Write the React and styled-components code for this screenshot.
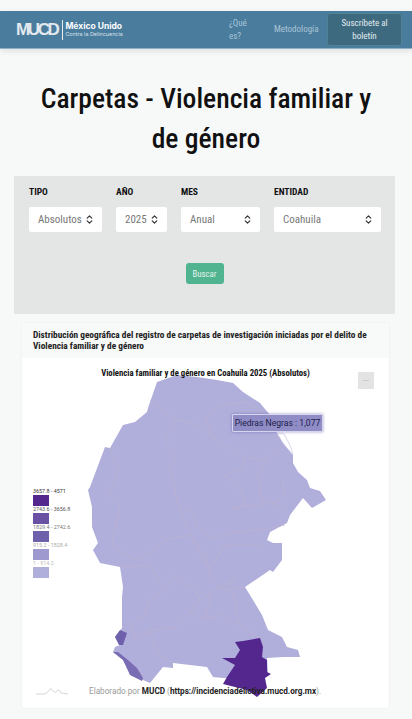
import React from "react";
import styled, { createGlobalStyle } from "styled-components";
import { ChevronsUpDown } from "lucide-react";

const narrow = `"Liberation Sans Narrow", "Roboto Condensed", Roboto, sans-serif`;

const GlobalStyle = createGlobalStyle`
  html, body {
    margin: 0;
    padding: 0;
    background: #f7f9f9;
    font-family: ${narrow};
    overflow: hidden;
  }
  * { box-sizing: border-box; }
`;

const filters = [
  { label: "TIPO", value: "Absolutos" },
  { label: "AÑO", value: "2025" },
  { label: "MES", value: "Anual" },
  { label: "ENTIDAD", value: "Coahuila" }
];

const legend = [
  { label: "3657.8 - 4571", fill: "#54278f", color: "#333" },
  { label: "2743.6 - 3656.8", fill: "#6a51a3", color: "#555" },
  { label: "1829.4 - 2742.6", fill: "#6e60ab", color: "#777" },
  { label: "915.2 - 1828.4", fill: "#9e9ad0", color: "#aaa" },
  { label: "1 - 914.2", fill: "#b0aedb", color: "#bbb" }
];

const outline =
  "M177 375 L197 377 L217 380 L233 383 L243 392 L260 403 L270 415 L277 433 L283 443 L293 455 L293 463 L298 472 L307 480 L310 488 L320 491 L326 500 L312 508 L303 498 L290 515 L287 523 L270 532 L267 540 L273 543 L282 543 L282 560 L273 572 L270 570 L245 587 L253 600 L262 615 L268 630 L282 637 L287 647 L298 650 L300 657 L283 657 L267 658 L268 673 L250 680 L223 678 L213 677 L207 667 L173 663 L173 668 L163 667 L150 683 L143 680 L130 672 L123 660 L113 652 L115 647 L120 645 L115 637 L122 628 L122 597 L123 587 L120 567 L100 563 L93 550 L98 543 L92 527 L92 507 L88 490 L90 487 L105 447 L110 448 L123 425 L135 422 L147 412 L148 408 L157 382 Z";

const borders = [
  "M150 400 L175 420 L200 425 L215 440 L245 458 L265 460 L283 445",
  "M175 420 L165 440 L175 455 L170 470 L178 505 L190 510 L198 528 L212 538 L235 532 L262 530 L285 525",
  "M215 440 L205 418 L220 405 L245 402 L262 412 L265 430 L280 438",
  "M110 448 L118 470 L108 495 L120 507 L115 530 L112 545 L135 560 L150 552 L165 540 L190 535 L205 555 L212 580 L225 590 L245 587",
  "M178 505 L195 545 L210 570 L225 545 L262 545",
  "M225 475 L240 490 L245 505 L235 510 L232 508 L260 505 L270 500 L290 515",
  "M245 458 L240 470 L225 475 M265 460 L258 475 L262 505 M282 480 L285 495 L272 505",
  "M120 567 L150 565 L165 590 L150 600 L145 615 L130 625 L135 640 L150 630 L175 628 L190 612 L205 620 L220 615 L240 625 L262 640",
  "M165 590 L175 575 L195 590 L200 600 L215 590 L235 580 L225 590",
  "M200 600 L190 612 M205 620 L210 595 M240 625 L232 590 M150 630 L158 655 L173 663"
];

const dark =
  "M235 642 L243 641 L260 638 L263 647 L262 657 L267 660 L267 672 L271 674 L265 678 L267 688 L257 697 L247 690 L223 684 L227 677 L235 665 L222 658 L235 658 L240 650 Z";
const midNorth = "M115 637 L120 630 L127 633 L123 645 L119 645 Z";
const midSouth = "M113 652 L118 652 L128 660 L137 668 L143 678 L142 681 L130 675 L123 660 Z";

const App = () => (
  <Page>
    <GlobalStyle />
    <Navbar>
      <Logo>
        <LogoMark>MUCD</LogoMark>
        <LogoText>
          <LogoName>México Unido</LogoName>
          <LogoTag>Contra la Delincuencia</LogoTag>
        </LogoText>
      </Logo>
      <NavLinks>
        <NavLink $width="30px">¿Qué es?</NavLink>
        <NavLink>Metodología</NavLink>
        <Subscribe>Suscríbete al boletín</Subscribe>
      </NavLinks>
    </Navbar>

    <Title>Carpetas - Violencia familiar y de género</Title>

    <FilterCard>
      <FilterGrid>
        {filters.map(f => (
          <Field key={f.label}>
            <FieldLabel>{f.label}</FieldLabel>
            <SelectBox>
              {f.value}
              <SelectIcon size={11} strokeWidth={2.6} />
            </SelectBox>
          </Field>
        ))}
      </FilterGrid>
      <SearchButton>Buscar</SearchButton>
    </FilterCard>

    <MapCard>
      <MapHeader>
        Distribución geográfica del registro de carpetas de investigación
        iniciadas por el delito de Violencia familiar y de género
      </MapHeader>
      <MapBody>
        <MapSvg viewBox="22 358 367 350">
          <path d={outline} fill="#b0aedb" />
          {borders.map((d, i) => (
            <path key={i} d={d} fill="none" stroke="#bdb3cf" strokeWidth="0.7" />
          ))}
          <path
            d="M277 433 L283 443 L293 455 L290 445 L284 434 Z"
            fill="#fff"
            stroke="#c9c6e2"
            strokeWidth="0.7"
          />
          <path d={midNorth} fill="#6e60ab" />
          <path d={midSouth} fill="#7a6db3" />
          <path d={dark} fill="#54278f" />
        </MapSvg>
        <ChartTitle>Violencia familiar y de género en Coahuila 2025 (Absolutos)</ChartTitle>
        <ExportButton>...</ExportButton>
        <Tooltip>Piedras Negras : 1,077</Tooltip>
        <Legend>
          {legend.map(l => (
            <LegendItem key={l.label}>
              <LegendLabel $color={l.color}>{l.label}</LegendLabel>
              <LegendSwatch $fill={l.fill} />
            </LegendItem>
          ))}
        </Legend>
        <Footer>
          <Spark viewBox="0 0 32 8">
            <path
              d="M0 7 L8 7 Q11 7 13 3 Q15 0 17 4 Q19 7 21 4 Q23 1 25 6 L32 7"
              fill="none"
              stroke="#c4c4c4"
              strokeWidth="0.7"
            />
          </Spark>
          <Credit>
            Elaborado por <b>MUCD</b> (<b>https://incidenciadelictiva.mucd.org.mx</b>).
          </Credit>
        </Footer>
      </MapBody>
    </MapCard>
  </Page>
);

export default App;

const Page = styled.div`
  width: 412px;
  height: 719px;
  padding-top: 11px;
  overflow: hidden;
`;

const Navbar = styled.nav`
  height: 38px;
  display: flex;
  align-items: center;
  justify-content: space-between;
  padding: 0 10px 0 16px;
  background: #4a7c9e;
  border-bottom: 1px solid #8fb0c6;
  box-shadow: 0 2px 6px rgba(0, 0, 0, 0.1);
`;

const Logo = styled.div`
  display: flex;
  align-items: center;
  height: 20px;
`;

const LogoMark = styled.span`
  font-family: "Liberation Sans", sans-serif;
  font-size: 17px;
  font-weight: 700;
  letter-spacing: -2.4px;
  color: #e3e9ee;
  padding-right: 5px;
`;

const LogoText = styled.div`
  display: flex;
  flex-direction: column;
  justify-content: center;
  height: 20px;
  padding-left: 2px;
  border-left: 1px solid #e8edf1;
  color: #fff;
`;

const LogoName = styled.span`
  font-family: Inter, sans-serif;
  font-size: 8.5px;
  font-weight: 700;
  line-height: 9px;
`;

const LogoTag = styled.span`
  font-family: Inter, sans-serif;
  font-size: 5.4px;
  line-height: 7px;
  color: #d7e2ea;
`;

const NavLinks = styled.div`
  display: flex;
  align-items: center;
`;

const NavLink = styled.a`
  width: ${({ $width }) => $width || "43px"};
  margin-right: ${({ $width }) => ($width ? "15px" : "10px")};
  font-size: 9px;
  line-height: 13px;
  color: #a9c4d6;
  white-space: ${({ $width }) => ($width ? "normal" : "nowrap")};
`;

const Subscribe = styled.button`
  width: 75px;
  height: 33px;
  padding: 0 10px;
  border: 1px solid #4f8293;
  border-radius: 3px;
  background: #3e6a80;
  color: #e1eaef;
  font-family: ${narrow};
  font-size: 9px;
  line-height: 13px;
`;

const Title = styled.h1`
  margin: 30px 28px 0;
  font-size: 27.6px;
  font-weight: 500;
  line-height: 40px;
  text-align: center;
  color: #111;
`;

const FilterCard = styled.section`
  height: 138px;
  margin: 17px 17px 0 14px;
  padding: 11px 15px 0;
  background: #e4e6e6;
`;

const FilterGrid = styled.div`
  display: grid;
  grid-template-columns: 73px 51px 79px 107px;
  column-gap: 14px;
`;

const Field = styled.div`
  display: flex;
  flex-direction: column;
  gap: 10px;
`;

const FieldLabel = styled.label`
  font-size: 9.5px;
  font-weight: 700;
  line-height: 10px;
  color: #111;
`;

const SelectBox = styled.div`
  position: relative;
  height: 25px;
  padding-left: 9px;
  border-radius: 2px;
  background: #fff;
  color: #777;
  font-size: 11px;
  line-height: 25px;
`;

const SelectIcon = styled(ChevronsUpDown)`
  position: absolute;
  top: 7px;
  right: 7px;
  color: #333;
`;

const SearchButton = styled.button`
  display: block;
  width: 38px;
  height: 21px;
  margin: 31px auto 0;
  padding: 0;
  border: 0;
  border-radius: 3px;
  background: #4fb48f;
  color: #e4f3ec;
  font-family: ${narrow};
  font-size: 8.8px;
`;

const MapCard = styled.section`
  height: 385px;
  margin: 9px 23px 0 22px;
  border-radius: 3px;
  background: #fff;
  box-shadow: 0 0 2px rgba(0, 0, 0, 0.08);
  overflow: hidden;
`;

const MapHeader = styled.header`
  height: 35px;
  padding: 7px 10px 0 11px;
  background: #f8f9f9;
  font-size: 9.3px;
  font-weight: 700;
  line-height: 10.5px;
  color: #222;
`;

const MapBody = styled.div`
  position: relative;
  height: 350px;
`;

const MapSvg = styled.svg`
  display: block;
  width: 367px;
  height: 350px;
`;

const ChartTitle = styled.div`
  position: absolute;
  top: 10px;
  left: 0;
  width: 100%;
  font-size: 8.7px;
  font-weight: 700;
  line-height: 11px;
  text-align: center;
  color: #111;
`;

const ExportButton = styled.div`
  position: absolute;
  top: 14px;
  right: 15px;
  width: 16px;
  height: 17px;
  background: #e3e3e3;
  color: #999;
  font-size: 8px;
  line-height: 14px;
  text-align: center;
`;

const Tooltip = styled.div`
  position: absolute;
  top: 56px;
  left: 210px;
  width: 91px;
  height: 18px;
  border: 1px solid #d6d5ec;
  border-radius: 1px;
  background: #8f8cc6;
  box-shadow: 0 0 3px rgba(90, 85, 170, 0.6);
  color: #20204a;
  font-family: Roboto, sans-serif;
  font-size: 8.6px;
  line-height: 16px;
  text-align: center;
  white-space: nowrap;
`;

const Legend = styled.div`
  position: absolute;
  top: 130px;
  left: 11px;
  display: flex;
  flex-direction: column;
`;

const LegendItem = styled.div`
  display: flex;
  flex-direction: column;
`;

const LegendLabel = styled.span`
  font-family: Roboto, sans-serif;
  font-size: 5.4px;
  line-height: 7px;
  white-space: nowrap;
  color: ${({ $color }) => $color};
`;

const LegendSwatch = styled.span`
  display: block;
  width: 16px;
  height: 11px;
  background: ${({ $fill }) => $fill};
`;

const Footer = styled.div`
  position: absolute;
  top: 327px;
  left: 14px;
  display: flex;
  align-items: center;
`;

const Spark = styled.svg`
  width: 32px;
  height: 8px;
  margin-right: 21px;
`;

const Credit = styled.span`
  font-family: Roboto, sans-serif;
  font-size: 8.2px;
  line-height: 12px;
  white-space: nowrap;
  color: #999;

  b {
    color: #222;
    font-weight: 700;
  }
`;
